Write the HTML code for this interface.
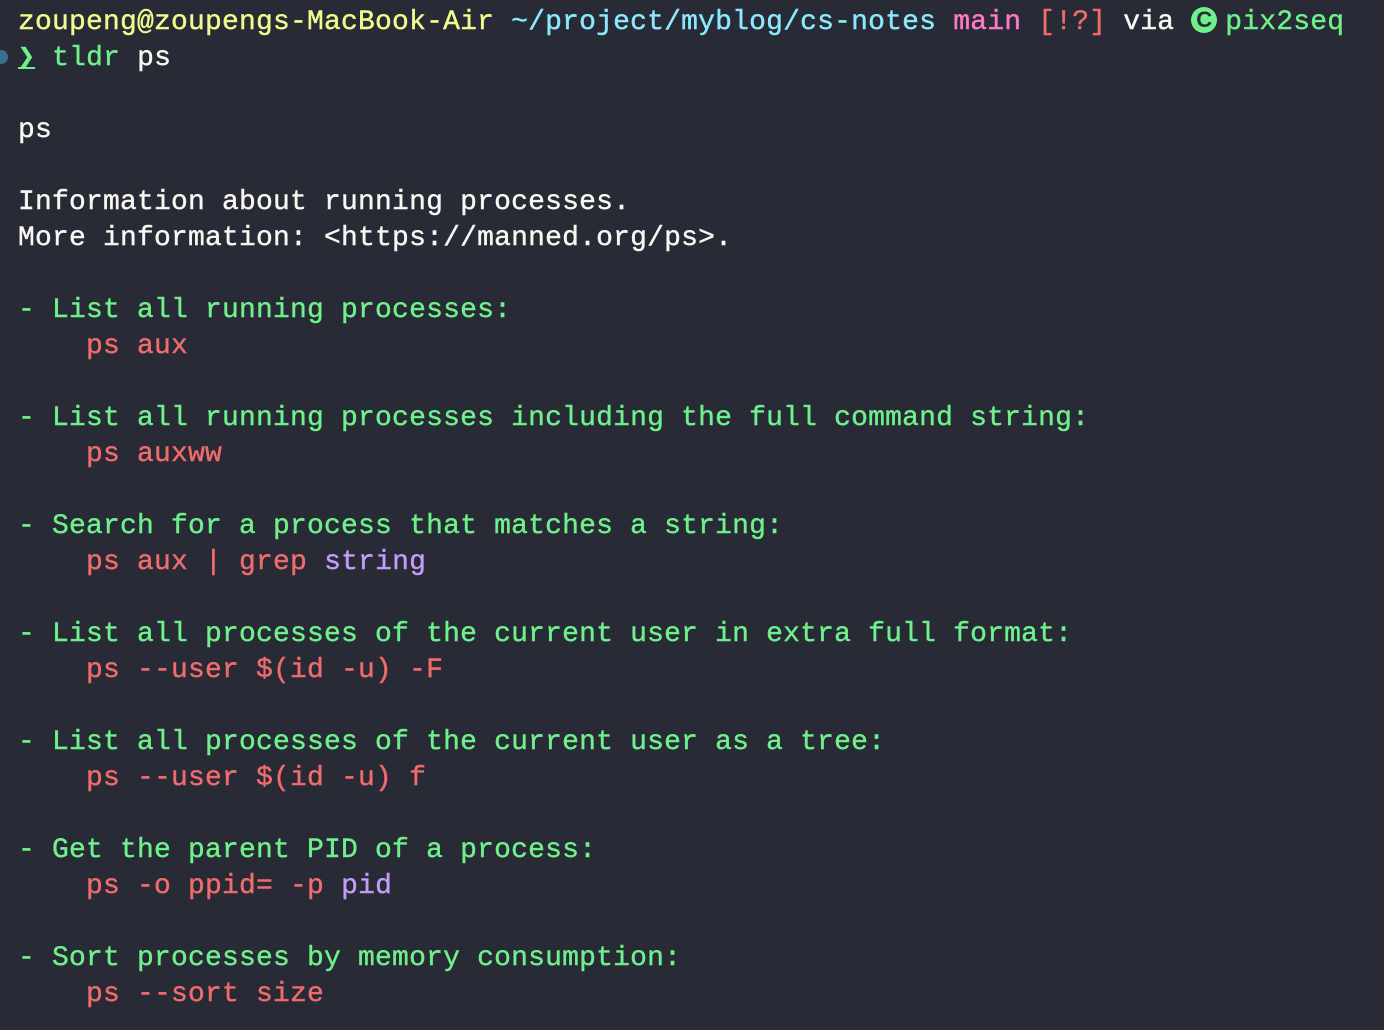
<!DOCTYPE html>
<html><head><meta charset="utf-8"><style>
html,body{margin:0;padding:0;background:#282a36;width:1384px;height:1030px;overflow:hidden}
pre{margin:0;position:absolute;left:18px;top:5px;font-family:"Liberation Mono","DejaVu Sans Mono",monospace;font-size:28px;letter-spacing:0.2px;line-height:36px;color:#f8f8f2;-webkit-text-stroke:0.4px}
.y{color:#f1fa8c}.c{color:#8be9fd}.p{color:#ff79c6}.r{color:#f06c6c}.g{color:#6ef08a}.v{color:#c39cf9}.w{color:#f8f8f2}
.dot{position:absolute;left:-6px;top:50px;width:14px;height:14px;border-radius:50%;background:#3a6f8f}
.u{text-decoration:underline}
.cc{display:inline-block;width:26px;height:26px;border-radius:50%;background:#6ef08a;color:#282a36;font-family:"Liberation Sans",sans-serif;font-size:22px;line-height:26px;text-align:center;vertical-align:top;position:relative;top:2px;margin-right:8px;font-weight:bold;letter-spacing:0;-webkit-text-stroke:0}
</style></head><body>
<div class="dot"></div>
<pre><span class="y">zoupeng@zoupengs-MacBook-Air</span> <span class="c">~/project/myblog/cs-notes</span> <span class="p">main</span> <span class="r">[!?]</span> via <span class="cc">C</span><span class="g">pix2seq</span>
<span class="g u">❯</span> <span class="g">tldr</span> ps

ps

Information about running processes.
More information: &lt;https://manned.org/ps&gt;.

<span class="g">- List all running processes:</span>
<span class="r">    ps aux</span>

<span class="g">- List all running processes including the full command string:</span>
<span class="r">    ps auxww</span>

<span class="g">- Search for a process that matches a string:</span>
<span class="r">    ps aux | grep </span><span class="v">string</span>

<span class="g">- List all processes of the current user in extra full format:</span>
<span class="r">    ps --user $(id -u) -F</span>

<span class="g">- List all processes of the current user as a tree:</span>
<span class="r">    ps --user $(id -u) f</span>

<span class="g">- Get the parent PID of a process:</span>
<span class="r">    ps -o ppid= -p </span><span class="v">pid</span>

<span class="g">- Sort processes by memory consumption:</span>
<span class="r">    ps --sort size</span></pre>
</body></html>
